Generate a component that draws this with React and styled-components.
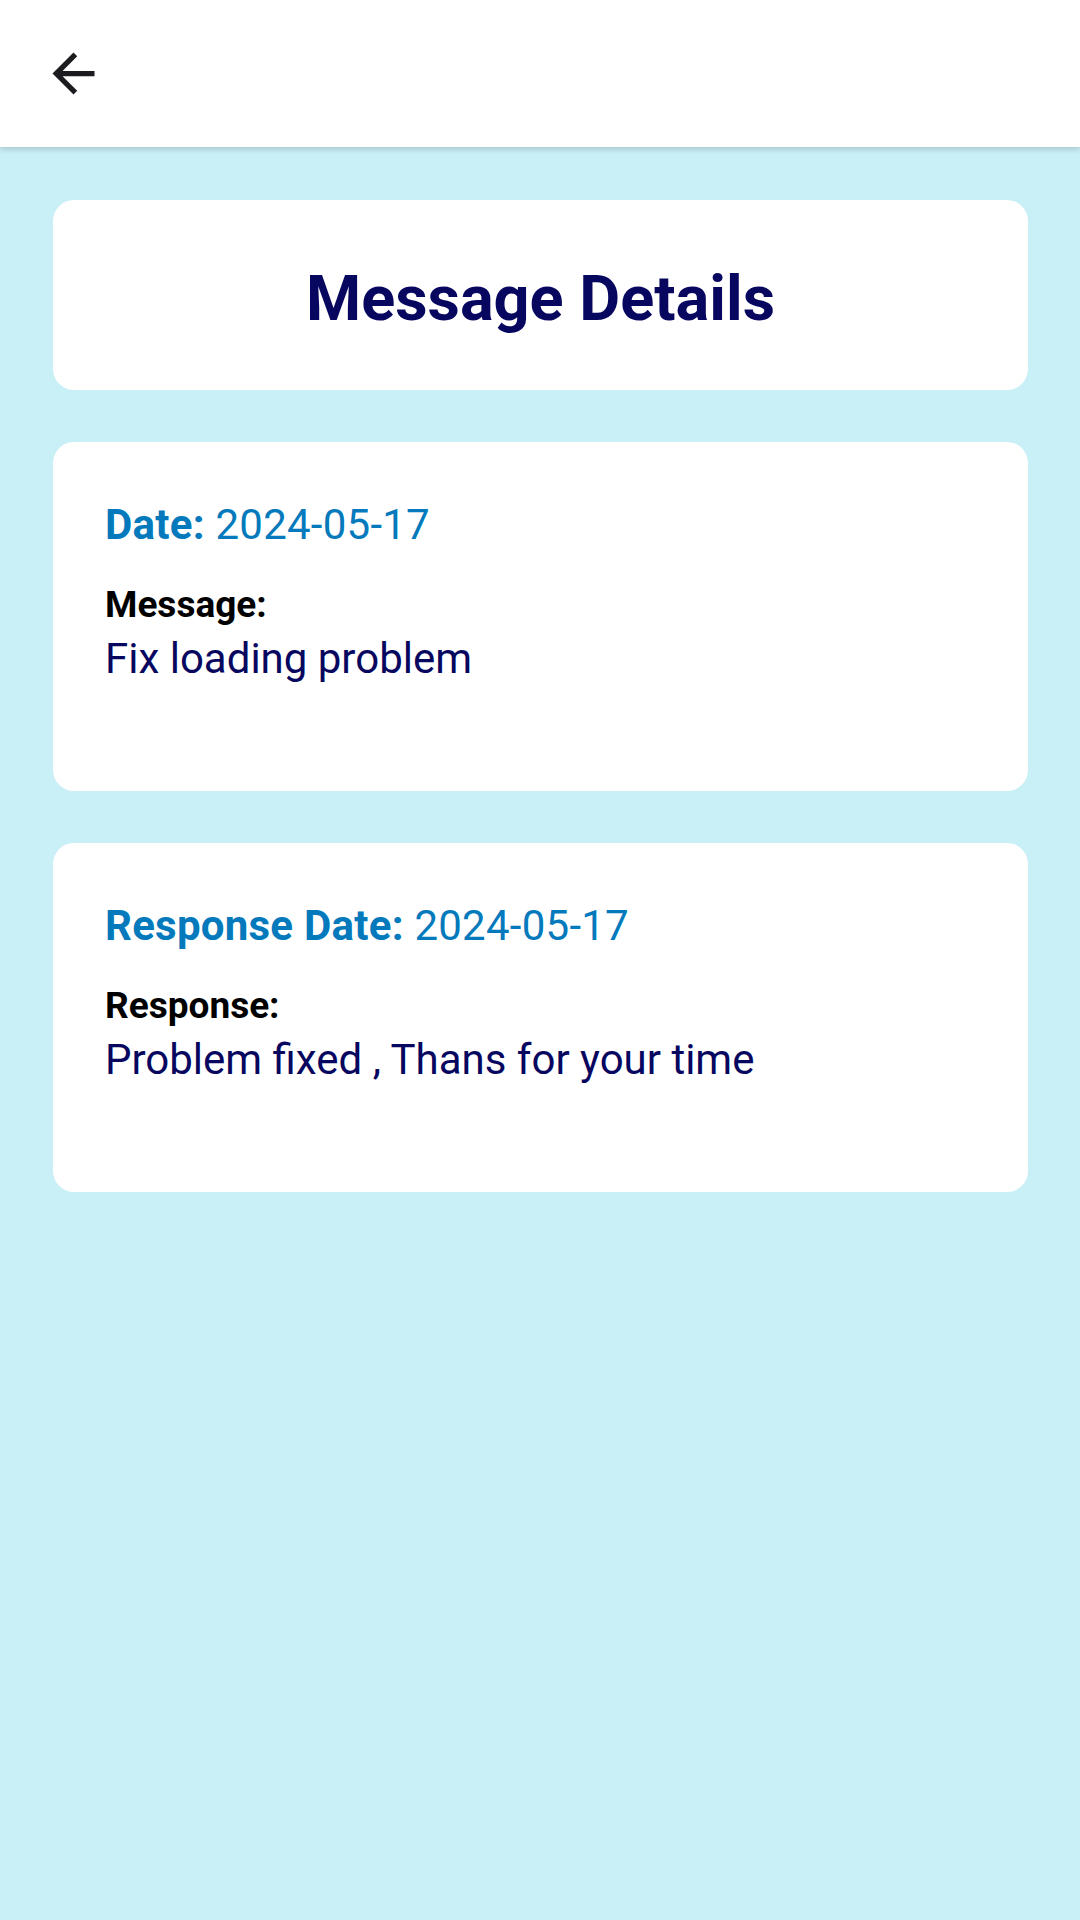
import React from "react";
import styled, { createGlobalStyle } from "styled-components";

const Global = createGlobalStyle`
  html, body {
    margin: 0;
    padding: 0;
    background: #c9eff7;
    font-family: Roboto, "Noto Sans", "Liberation Sans", sans-serif;
  }
  * { box-sizing: border-box; }
`;

const Screen = styled.div`
  min-height: 1920px;
  width: 1080px;
  background: #c9eff7;
  display: flex;
  flex-direction: column;
`;

const TopBar = styled.header`
  height: 147px;
  background: #ffffff;
  display: flex;
  align-items: center;
  padding-left: 42px;
  box-shadow: 0 2px 6px rgba(0, 0, 0, 0.18);
  position: relative;
  z-index: 1;
`;

const BackButton = styled.button`
  width: 63px;
  height: 63px;
  padding: 0;
  border: none;
  background: transparent;
  display: flex;
  align-items: center;
  justify-content: center;
  cursor: pointer;
`;

const Content = styled.main`
  display: flex;
  flex-direction: column;
  gap: 52px;
  padding: 53px 52px 53px 53px;
`;

const Card = styled.section`
  background: #ffffff;
  border-radius: 21px;
`;

const TitleCard = styled(Card)`
  height: 190px;
  padding-top: 62px;
  text-align: center;
`;

const Title = styled.h1`
  margin: 0;
  font-size: 63px;
  line-height: 74px;
  font-weight: 700;
  color: #07075f;
`;

const InfoCard = styled(Card)`
  height: 349px;
  padding: 58px 52px 0;
  display: flex;
  flex-direction: column;
`;

const DateLine = styled.div`
  font-size: 42px;
  line-height: 49px;
  letter-spacing: 0.25px;
  color: #0479bc;
  white-space: nowrap;
`;

const DateLabel = styled.span`
  font-weight: 700;
`;

const FieldLabel = styled.div`
  margin-top: 34px;
  font-size: 37px;
  line-height: 43px;
  font-weight: 700;
  color: #000000;
`;

const FieldText = styled.div`
  margin-top: 8px;
  font-size: 42px;
  line-height: 49px;
  color: #07075f;
`;

const BackArrow = () => (
  <svg width="63" height="63" viewBox="0 0 24 24" aria-hidden="true">
    <path
      d="M20 11H7.83l5.59-5.59L12 4l-8 8 8 8 1.41-1.41L7.830 13H20v-2z"
      fill="#1c1b1f"
    />
  </svg>
);

const DetailCard = ({ dateLabel, date, label, text }) => (
  <InfoCard>
    <DateLine>
      <DateLabel>{dateLabel}</DateLabel> {date}
    </DateLine>
    <FieldLabel>{label}</FieldLabel>
    <FieldText>{text}</FieldText>
  </InfoCard>
);

export default function App() {
  return (
    <>
      <Global />
      <Screen>
        <TopBar>
          <BackButton aria-label="Back">
            <BackArrow />
          </BackButton>
        </TopBar>
        <Content>
          <TitleCard>
            <Title>Message Details</Title>
          </TitleCard>
          <DetailCard
            dateLabel="Date:"
            date="2024-05-17"
            label="Message:"
            text="Fix loading problem"
          />
          <DetailCard
            dateLabel="Response Date:"
            date="2024-05-17"
            label="Response:"
            text="Problem fixed , Thans for your time"
          />
        </Content>
      </Screen>
    </>
  );
}
